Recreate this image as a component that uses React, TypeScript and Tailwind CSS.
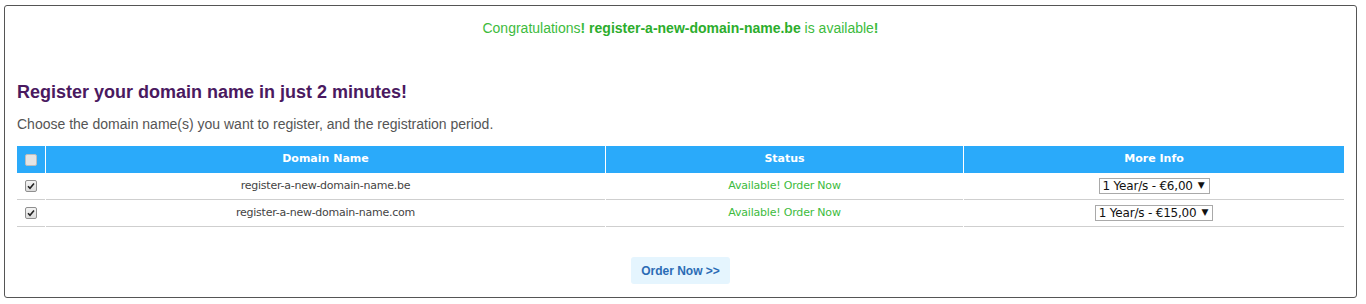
import React from "react";

const rows = [
  { name: "register-a-new-domain-name.be", price: "1 Year/s - €6,00" },
  { name: "register-a-new-domain-name.com", price: "1 Year/s - €15,00" },
];

function Box({ checked, muted }: { checked?: boolean; muted?: boolean }) {
  return (
    <span
      className={
        "inline-flex h-[12px] w-[12px] items-center justify-center rounded-[2px] border " +
        (muted ? "border-[#bdbdbd] bg-[#e4e4e4]" : "border-[#8f8f8f] bg-gradient-to-b from-[#f4f4f4] to-[#dcdcdc]")
      }
    >
      {checked && (
        <svg width="8" height="8" viewBox="0 0 8 8">
          <path d="M1 4.2 L3 6.3 L7 1.5" fill="none" stroke="#222" strokeWidth="1.6" />
        </svg>
      )}
    </span>
  );
}

export default function App() {
  return (
    <div className="h-[304px] w-[1366px] bg-white pl-[4px] pt-[5px] font-['Liberation_Sans',Arial,sans-serif]">
      <div className="h-[293px] w-[1353px] rounded-[3px] border border-[#555] px-[12px]">
        {/* availability notice */}
        <p className="pt-[12px] text-center text-[14px] leading-[20px] text-[#3dbb3d]">
          Congratulations<b>!</b> <b className="text-[#2cad2c]">register-a-new-domain-name.be</b> is available<b>!</b>
        </p>

        <h2 className="mt-[42px] text-[18px] font-bold leading-[24px] text-[#4a1960]">
          Register your domain name in just 2 minutes!
        </h2>
        <p className="mt-[10px] text-[14px] leading-[20px] text-[#555]">
          Choose the domain name(s) you want to register, and the registration period.
        </p>

        {/* domains table */}
        <div className="mt-[12px] grid grid-cols-[28px_559px_357px_1fr] gap-x-px font-['DejaVu_Sans',Tahoma,sans-serif] text-[11px]">
          <div className="flex h-[27px] items-center justify-center bg-[#2aaafa]">
            <Box muted />
          </div>
          <div className="flex h-[27px] items-center justify-center bg-[#2aaafa] font-bold text-white">Domain Name</div>
          <div className="flex h-[27px] items-center justify-center bg-[#2aaafa] font-bold text-white">Status</div>
          <div className="flex h-[27px] items-center justify-center bg-[#2aaafa] font-bold text-white">More Info</div>

          {rows.map((r) => (
            <React.Fragment key={r.name}>
              <div className="flex h-[27px] items-center justify-center border-b border-[#cfcfcf]">
                <Box checked />
              </div>
              <div className="flex h-[27px] items-center justify-center border-b border-[#cfcfcf] tracking-[-0.25px] text-[#444]">
                {r.name}
              </div>
              <div className="flex h-[27px] items-center justify-center border-b border-[#cfcfcf] tracking-[-0.2px] text-[#3dbb3d]">
                Available! Order Now
              </div>
              <div className="flex h-[27px] items-center justify-center border-b border-[#cfcfcf]">
                <span className="flex h-[16px] items-center gap-[5px] border border-[#a9a9a9] bg-white pl-[3px] pr-[4px] text-[12px] tracking-[-0.2px] text-[#111]">
                  {r.price}
                  <span className="text-[9px]">▼</span>
                </span>
              </div>
            </React.Fragment>
          ))}
        </div>

        <div className="mt-[30px] flex justify-center">
          <button className="h-[27px] rounded-[3px] bg-[#e5f5fe] px-[10px] text-[12px] font-bold text-[#2b6cb5]">
            Order Now &gt;&gt;
          </button>
        </div>
      </div>
    </div>
  );
}
